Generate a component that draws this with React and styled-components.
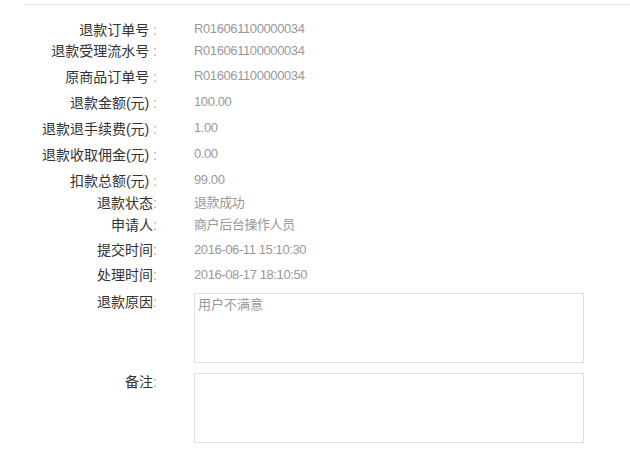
import React from 'react';
import styled, { createGlobalStyle } from 'styled-components';

const GlobalStyle = createGlobalStyle`
  html, body {
    margin: 0;
    padding: 0;
    background: #fff;
  }
  body {
    font-family: "Liberation Sans", "Noto Sans CJK SC", sans-serif;
  }
`;

// 상단 구분선
const Divider = styled.div`
  height: 1px;
  margin: 4px 0 0 24px;
  background: #e6e6e6;
`;

const List = styled.div`
  display: flex;
  flex-direction: column;
  padding-top: 15px;
`;

// 한 줄 (라벨 + 값)
const Row = styled.div`
  display: flex;
  align-items: flex-start;
  margin-top: ${({ $mt }) => $mt}px;
`;

const Label = styled.div`
  width: 157px;
  flex: none;
  text-align: right;
  font-size: 14px;
  line-height: 20px;
  color: #333;
  white-space: nowrap;
`;

const Colon = styled.span`
  color: #aaa;
`;

const Value = styled.div`
  margin-left: 37px;
  margin-top: ${({ $up }) => ($up ? -1 : 0)}px;
  font-size: 13px;
  line-height: 20px;
  letter-spacing: -0.4px;
  color: #999;
  white-space: nowrap;
`;

const Box = styled.textarea`
  display: block;
  box-sizing: border-box;
  width: 390px;
  height: 70px;
  margin: 1px 0 0 37px;
  padding: 3px 3px;
  border: 1px solid #e0e0e0;
  border-radius: 0;
  outline: none;
  resize: none;
  font-family: "Liberation Sans", "Noto Sans CJK SC", sans-serif;
  font-size: 13px;
  line-height: 16px;
  color: #999;
  background: #fff;
`;

const rows = [
  { label: '退款订单号 ', value: 'R016061100000034', mt: 0, up: true },
  { label: '退款受理流水号 ', value: 'R016061100000034', mt: 1 },
  { label: '原商品订单号 ', value: 'R016061100000034', mt: 6, up: true },
  { label: '退款金额(元) ', value: '100.00', mt: 6, up: true },
  { label: '退款退手续费(元) ', value: '1.00', mt: 6, up: true },
  { label: '退款收取佣金(元) ', value: '0.00', mt: 6, up: true },
  { label: '扣款总额(元) ', value: '99.00', mt: 6, up: true },
  { label: '退款状态', value: '退款成功', mt: 2 },
  { label: '申请人', value: '商户后台操作人员', mt: 2 },
  { label: '提交时间', value: '2016-06-11 15:10:30', mt: 5 },
  { label: '处理时间', value: '2016-08-17 18:10:50', mt: 5 },
];

export default function App() {
  return (
    <>
      <GlobalStyle />
      <Divider />
      <List>
        {rows.map((r) => (
          <Row key={r.label} $mt={r.mt}>
            <Label>
              {r.label}
              <Colon>:</Colon>
            </Label>
            <Value $up={r.up}>{r.value}</Value>
          </Row>
        ))}
        <Row $mt={7}>
          <Label>
            退款原因<Colon>:</Colon>
          </Label>
          <Box readOnly defaultValue="用户不满意" />
        </Row>
        <Row $mt={9}>
          <Label>
            备注<Colon>:</Colon>
          </Label>
          <Box readOnly defaultValue="" />
        </Row>
      </List>
    </>
  );
}
